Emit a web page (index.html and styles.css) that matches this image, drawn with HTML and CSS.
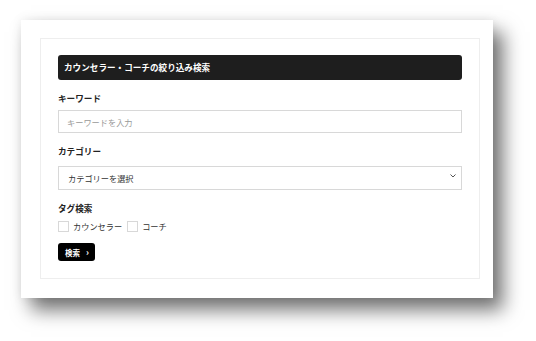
FILE: index.html
```html
<!DOCTYPE html>
<html lang="ja">
<head>
    <meta charset="UTF-8">
    <meta name="viewport" content="width=device-width, initial-scale=1.0">
    <title>カウンセラー・コーチの絞り込み検索</title>
    <link rel="stylesheet" href="styles.css">
</head>
<body>
    <div class="sheet">
        <form class="panel">
            <h2 class="panel-title">カウンセラー・コーチの絞り込み検索</h2>

            <label class="field-label" for="keyword">キーワード</label>
            <input class="field" type="text" id="keyword" placeholder="キーワードを入力">

            <label class="field-label" for="category">カテゴリー</label>
            <div class="select-wrap">
                <select class="field" id="category">
                    <option value="">カテゴリーを選択</option>
                </select>
                <svg class="chevron" width="6" height="4" viewBox="0 0 6 4">
                    <path d="M0.5 0.5 L3 3 L5.5 0.5" fill="none" stroke="#555" stroke-width="1"/>
                </svg>
            </div>

            <span class="field-label">タグ検索</span>
            <div class="tags">
                <label class="tag"><span class="box"></span>カウンセラー</label>
                <label class="tag"><span class="box"></span>コーチ</label>
            </div>

            <!-- submit -->
            <button type="button" class="search-btn">検索<span class="arrow">›</span></button>
        </form>
    </div>
</body>
</html>
```

FILE: styles.css
```css
* {
    box-sizing: border-box;
}
html, body {
    height: 100%;
}
body {
    margin: 0;
    background-color: #fff;
    font-family: "Noto Sans CJK JP", "Noto Sans", sans-serif;
    color: #222;
    padding: 20px 0 0 21px;
}
.sheet {
    width: 472px;
    height: 278px;
    background-color: #fff;
    padding: 18px 13px 19px 19px;
    box-shadow: 10px 12px 18px rgba(0, 0, 0, 0.55), 0 0 10px rgba(0, 0, 0, 0.08);
}
.panel {
    height: 100%;
    border: 1px solid #eee;
    padding: 16px 17px 17px 17px;
    display: flex;
    flex-direction: column;
    align-items: flex-start;
}
.panel-title {
    width: 100%;
    height: 25px;
    margin: 0;
    background-color: #1e1e1e;
    border-radius: 3px;
    color: #fff;
    font-size: 8.6px;
    font-weight: bold;
    line-height: 25px;
    padding-left: 6px;
}
.field-label {
    display: block;
    font-size: 8.6px;
    font-weight: bold;
    line-height: 12px;
    height: 12px;
    margin-top: 12px;
    margin-bottom: 6px;
}
.field {
    width: 100%;
    height: 24px;
    border: 1px solid #d8d8d8;
    border-radius: 0;
    background-color: #fff;
    font-family: inherit;
    font-size: 8.2px;
    color: #333;
    padding: 0 8px;
    margin: 0;
    outline: none;
}
.field::placeholder {
    color: #999;
}
.select-wrap {
    position: relative;
    width: 100%;
}
select.field {
    appearance: none;
    -webkit-appearance: none;
    padding-left: 9px;
}
.chevron {
    position: absolute;
    right: 6px;
    top: 11px;
}
.tags {
    display: flex;
    gap: 5px;
    height: 12px;
    align-items: center;
}
.tag {
    display: flex;
    align-items: center;
    font-size: 8.2px;
    color: #333;
}
.box {
    width: 11px;
    height: 11px;
    border: 1px solid #d8d8d8;
    margin-right: 4px;
}
.search-btn {
    margin-top: 11px;
    width: 37px;
    height: 18px;
    background-color: #000;
    color: #fff;
    border: none;
    border-radius: 3px;
    font-family: inherit;
    font-size: 7.5px;
    font-weight: bold;
    padding: 0 0 0 1px;
    display: flex;
    align-items: center;
    justify-content: center;
}
.arrow {
    margin-left: 6px;
    font-weight: bold;
    font-size: 9px;
    line-height: 1;
}
```
